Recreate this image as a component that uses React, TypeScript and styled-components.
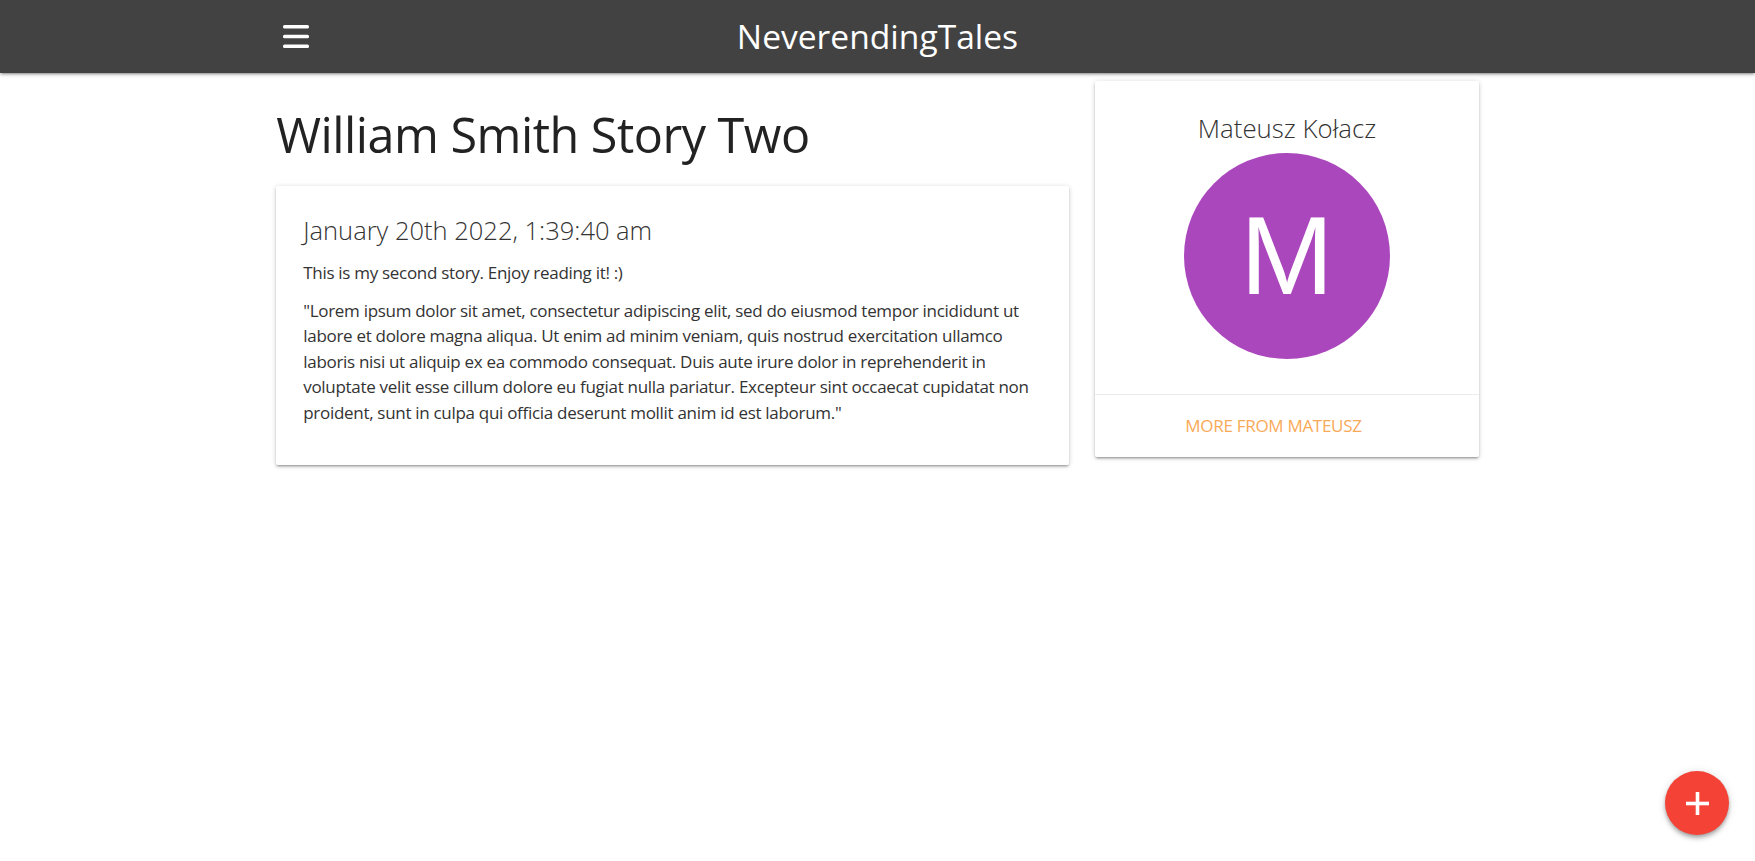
import React from "react";
import styled, { createGlobalStyle } from "styled-components";

const GlobalStyle = createGlobalStyle`
  html, body { margin: 0; padding: 0; background: #fff; }
  body {
    font-family: "Open Sans", "Noto Sans", Arial, sans-serif;
    color: rgba(0, 0, 0, 0.87);
    font-size: 17px;
    line-height: 1.5;
  }
  * { box-sizing: border-box; }
`;

const zDepth1 =
  "0 2px 2px 0 rgba(0,0,0,0.14), 0 3px 1px -2px rgba(0,0,0,0.12), 0 1px 5px 0 rgba(0,0,0,0.2)";

const Nav = styled.nav`
  height: 73px;
  background: #424242;
  box-shadow: ${zDepth1};
  position: relative;
  z-index: 2;
`;

const NavInner = styled.div`
  width: 70%;
  margin: 0 auto;
  height: 100%;
  display: grid;
  grid-template-columns: 1fr auto 1fr;
  align-items: center;
`;

const MenuButton = styled.button`
  justify-self: start;
  background: none;
  border: 0;
  padding: 0;
  margin-left: 16px;
  width: 34px;
  height: 34px;
  display: flex;
  align-items: center;
  justify-content: center;
  cursor: pointer;
`;

const Brand = styled.a`
  color: #fff;
  font-size: 33.6px;
  line-height: 73px;
  text-decoration: none;
`;

const Container = styled.main`
  width: 70%;
  margin: 0 auto;
`;

const Row = styled.div`
  display: flex;
  align-items: flex-start;
`;

const Col = styled.div<{ $span: number }>`
  flex: 0 0 ${(p) => (p.$span / 12) * 100}%;
  padding: 0 13px;
`;

const Title = styled.h1`
  font-size: 48.5px;
  font-weight: 400;
  line-height: 1.1;
  margin: 35px 0 25px;
  color: #222;
  letter-spacing: -0.5px;
`;

const Card = styled.div`
  background: #fff;
  border-radius: 2px;
  box-shadow: ${zDepth1};
  margin: 8px 0 16px;
`;

const CardContent = styled.div<{ $center?: boolean }>`
  padding: 29px 27px 27px;
  text-align: ${(p) => (p.$center ? "center" : "left")};
`;

const DateLine = styled.h5`
  font-size: 25.5px;
  font-weight: 300;
  line-height: 1.2;
  margin: 0 0 14px;
  color: #333;
`;

const Para = styled.p`
  font-size: 17px;
  line-height: 25.6px;
  letter-spacing: -0.3px;
  margin: 0 0 12px;
  color: #333;
`;

const AuthorName = styled.span`
  display: block;
  font-size: 25.8px;
  font-weight: 300;
  line-height: 36px;
  color: #333;
`;

const Avatar = styled.div`
  width: 206px;
  height: 206px;
  border-radius: 50%;
  background: #ab47bc;
  color: #fff;
  margin: 7px auto 8px;
  display: flex;
  align-items: center;
  justify-content: center;
  font-family: "Liberation Sans", Arial, sans-serif;
  font-size: 112px;
  line-height: 1;
`;

const CardAction = styled.div`
  border-top: 1px solid rgba(160, 160, 160, 0.2);
  padding: 18px 27px;
  text-align: center;
`;

const ActionLink = styled.a`
  color: #f9aa58;
  text-transform: uppercase;
  text-decoration: none;
  font-size: 17px;
  line-height: 26px;
  margin-right: 27px;
  letter-spacing: -0.3px;
`;

const Fab = styled.button`
  position: fixed;
  right: 26px;
  bottom: 26px;
  width: 64px;
  height: 64px;
  border-radius: 50%;
  border: 0;
  background: #f44336;
  box-shadow: 0 4px 5px 0 rgba(0,0,0,0.14), 0 1px 10px 0 rgba(0,0,0,0.12), 0 2px 4px -1px rgba(0,0,0,0.3);
  display: flex;
  align-items: center;
  justify-content: center;
  cursor: pointer;
  padding: 0;
`;

const MenuIcon = () => (
  <svg width="26" height="23" viewBox="0 0 26 23">
    <rect x="0" y="0" width="26" height="3.4" rx="1.5" fill="#fff" />
    <rect x="0" y="9.8" width="26" height="3.4" rx="1.5" fill="#fff" />
    <rect x="0" y="19.6" width="26" height="3.4" rx="1.5" fill="#fff" />
  </svg>
);

const PlusIcon = () => (
  <svg width="23" height="23" viewBox="0 0 23 23">
    <rect x="9.7" y="0" width="3.6" height="23" fill="#fff" />
    <rect x="0" y="9.7" width="23" height="3.6" fill="#fff" />
  </svg>
);

export default function App() {
  return (
    <>
      <GlobalStyle />
      <Nav>
        <NavInner>
          <MenuButton aria-label="menu">
            <MenuIcon />
          </MenuButton>
          <Brand href="#">NeverendingTales</Brand>
          <span />
        </NavInner>
      </Nav>
      <Container>
        <Row>
          <Col $span={8}>
            <Title>William Smith Story Two</Title>
            <Card>
              <CardContent>
                <DateLine>January 20th 2022, 1:39:40 am</DateLine>
                <Para>This is my second story. Enjoy reading it! :)</Para>
                <Para>
                  "Lorem ipsum dolor sit amet, consectetur adipiscing elit, sed do eiusmod tempor
                  incididunt ut labore et dolore magna aliqua. Ut enim ad minim veniam, quis nostrud
                  exercitation ullamco laboris nisi ut aliquip ex ea commodo consequat. Duis aute irure
                  dolor in reprehenderit in voluptate velit esse cillum dolore eu fugiat nulla pariatur.
                  Excepteur sint occaecat cupidatat non proident, sunt in culpa qui officia deserunt
                  mollit anim id est laborum."
                </Para>
              </CardContent>
            </Card>
          </Col>
          <Col $span={4}>
            <Card>
              <CardContent $center>
                <AuthorName>Mateusz Kołacz</AuthorName>
                <Avatar>M</Avatar>
              </CardContent>
              <CardAction>
                <ActionLink href="#">More from Mateusz</ActionLink>
              </CardAction>
            </Card>
          </Col>
        </Row>
      </Container>
      <Fab aria-label="add">
        <PlusIcon />
      </Fab>
    </>
  );
}
